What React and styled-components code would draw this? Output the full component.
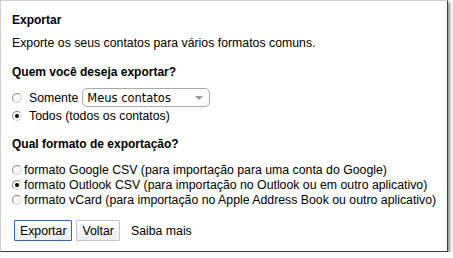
import styled, { createGlobalStyle } from 'styled-components';

const Global = createGlobalStyle`
  html, body {
    margin: 0;
    background: #fff;
  }
  body {
    font-family: "Liberation Sans", Arial, sans-serif;
    font-size: 12.3px;
    color: #000;
  }
`;

const Frame = styled.div`
  width: 448px;
  height: 252px;
  box-sizing: border-box;
  background: #fff;
  border-top: 1px solid #cfcfcf;
  border-left: 1px solid #cfcfcf;
  border-right: 1px solid #3a3a3a;
  border-bottom: 1px solid #3a3a3a;
  box-shadow: 2px 2px 3px rgba(0, 0, 0, 0.45);
  padding: 11px 0 0 11px;
`;

const Title = styled.div`
  font-weight: bold;
  font-size: 12px;
  line-height: 16px;
  margin-top: ${(p) => p.$top || 0}px;
`;

const Text = styled.div`
  line-height: 16px;
  margin-top: ${(p) => p.$top || 0}px;
`;

const Row = styled.label`
  display: flex;
  align-items: center;
  height: ${(p) => p.$h}px;
  margin-top: ${(p) => p.$top || 0}px;
  gap: ${(p) => p.$gap}px;
  white-space: nowrap;
`;

const Radio = styled.span`
  position: relative;
  width: 10px;
  height: 10px;
  flex: none;
  box-sizing: border-box;
  border-radius: 50%;
  border: 1px solid #8a8a8a;
  border-right-color: #dcdcdc;
  border-bottom-color: #cfcfcf;
  background: linear-gradient(135deg, #fff, #eee);
  &::after {
    content: '';
    display: ${(p) => (p.$on ? 'block' : 'none')};
    position: absolute;
    left: 2px;
    top: 2px;
    width: 4px;
    height: 4px;
    border-radius: 50%;
    background: #000;
  }
`;

const Select = styled.div`
  display: flex;
  align-items: center;
  justify-content: space-between;
  width: 128px;
  height: 19px;
  box-sizing: border-box;
  margin-left: -3px;
  padding: 0 6px 0 4px;
  border: 1px solid #a8a8a8;
  border-radius: 5px;
  background: #fff;
  font-family: "DejaVu Sans", Verdana, sans-serif;
  font-size: 11.5px;
  color: #000;
`;

const Arrow = styled.span`
  width: 0;
  height: 0;
  border-left: 4px solid transparent;
  border-right: 4px solid transparent;
  border-top: 4px solid #999;
`;

const Actions = styled.div`
  display: flex;
  align-items: center;
  margin-top: 13px;
  margin-left: 2px;
`;

const Button = styled.button`
  height: 21px;
  padding: 0 5px;
  margin-right: 4px;
  font-family: "Liberation Sans", Arial, sans-serif;
  font-size: 12.3px;
  color: #000;
  background: linear-gradient(#fdfdfd, #ececec);
  border: 1px solid ${(p) => (p.$primary ? '#2f64c3' : '#c4c4c4')};
  border-radius: 1px;
`;

const LinkText = styled.span`
  margin-left: 7px;
`;

export default function App() {
  return (
    <>
      <Global />
      <Frame>
        <Title>Exportar</Title>
        <Text $top={7}>Exporte os seus contatos para vários formatos comuns.</Text>
        <Title $top={13}>Quem você deseja exportar?</Title>
        <Row $h={19} $top={8} $gap={7}>
          <Radio />
          <span>Somente</span>
          <Select>
            Meus contatos
            <Arrow />
          </Select>
        </Row>
        <Row $h={16} $top={1} $gap={7}>
          <Radio $on />
          <span>Todos (todos os contatos)</span>
        </Row>
        <Title $top={12}>Qual formato de exportação?</Title>
        <Row $h={15} $top={10} $gap={2}>
          <Radio />
          <span>formato Google CSV (para importação para uma conta do Google)</span>
        </Row>
        <Row $h={15} $gap={2}>
          <Radio $on />
          <span>formato Outlook CSV (para importação no Outlook ou em outro aplicativo)</span>
        </Row>
        <Row $h={15} $gap={2}>
          <Radio />
          <span>formato vCard (para importação no Apple Address Book ou outro aplicativo)</span>
        </Row>
        <Actions>
          <Button $primary>Exportar</Button>
          <Button>Voltar</Button>
          <LinkText>Saiba mais</LinkText>
        </Actions>
      </Frame>
    </>
  );
}
